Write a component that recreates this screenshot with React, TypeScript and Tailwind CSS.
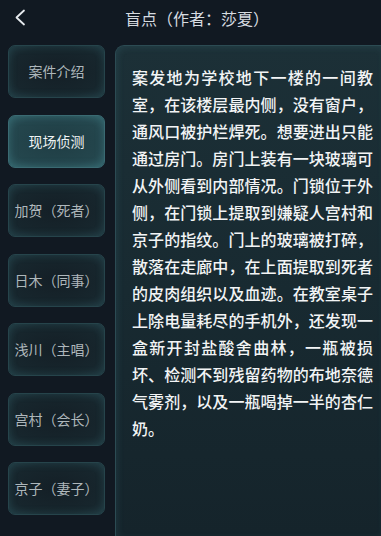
const tabs = [
  "案件介绍",
  "现场侦测",
  "加贺（死者）",
  "日木（同事）",
  "浅川（主唱）",
  "宫村（会长）",
  "京子（妻子）",
];

const lines = [
  "案发地为学校地下一楼的一间教",
  "室，在该楼层最内侧，没有窗户，",
  "通风口被护栏焊死。想要进出只能",
  "通过房门。房门上装有一块玻璃可",
  "从外侧看到内部情况。门锁位于外",
  "侧，在门锁上提取到嫌疑人宫村和",
  "京子的指纹。门上的玻璃被打碎，",
  "散落在走廊中，在上面提取到死者",
  "的皮肉组织以及血迹。在教室桌子",
  "上除电量耗尽的手机外，还发现一",
  "盒新开封盐酸舍曲林，一瓶被损",
  "坏、检测不到残留药物的布地奈德",
  "气雾剂，以及一瓶喝掉一半的杏仁",
];

export default function App() {
  return (
    <div
      className="w-[381px] h-[536px] overflow-hidden bg-[#111922] flex flex-col"
      style={{ fontFamily: '"Noto Sans CJK SC", "Noto Sans", sans-serif' }}
    >
      <div className="h-[45px] shrink-0 relative flex items-center">
        <svg
          className="absolute left-[14px] top-[9px]"
          width="12"
          height="17"
          viewBox="0 0 12 17"
          fill="none"
        >
          <path d="M10 1.5 L2.5 8.5 L10 15.5" stroke="#e6eaee" strokeWidth="1.8" strokeLinecap="round" strokeLinejoin="round" />
        </svg>
        <div className="flex-1 text-center pl-[13px] -mt-[10px] text-[16px] text-[#d6dbe0]">
          盲点（作者：莎夏）
        </div>
      </div>

      <div className="flex flex-1 min-h-0">
        <div className="w-[115px] shrink-0 flex flex-col gap-[16.5px] pl-[8px] pr-[10px]">
          {tabs.map((t, i) => (
            <div
              key={t}
              className={
                i === 1
                  ? "h-[53px] rounded-[7px] border border-[#3a6a72] bg-[radial-gradient(ellipse_at_center,#1f3d44_0%,#24464d_70%,#2b555c_100%)] shadow-[inset_0_0_8px_rgba(90,170,180,0.35)] flex items-center justify-center text-[14px] text-[#eef3f4] whitespace-nowrap"
                  : "h-[53px] rounded-[7px] border border-[#26444b] bg-[radial-gradient(ellipse_at_center,#141f26_0%,#17262d_70%,#1c3138_100%)] shadow-[inset_0_0_8px_rgba(70,140,150,0.25)] flex items-center justify-center text-[14px] text-[#aeb7bb] whitespace-nowrap"
              }
            >
              {t}
            </div>
          ))}
        </div>

        <div className="flex-1 rounded-tl-[9px] border-l border-t border-[#2c4b53] bg-[linear-gradient(180deg,#1c3037_0%,#182a31_50%,#15242b_100%)] shadow-[inset_2px_2px_6px_rgba(80,150,160,0.15)] pl-[16px] pt-[18px]">
          <div className="w-[241px] text-[16px] leading-[27px] font-medium text-[#f2f4f5]">
            {lines.map((l) => (
              <div key={l} className="whitespace-nowrap text-justify [text-align-last:justify]">
                {l}
              </div>
            ))}
            <div>奶。</div>
          </div>
        </div>
      </div>
    </div>
  );
}
